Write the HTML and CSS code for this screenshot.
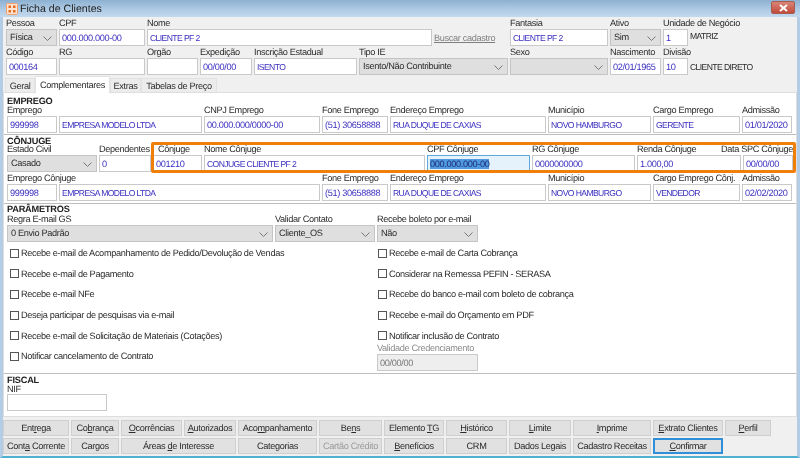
FILE: index.html
```html
<!DOCTYPE html>
<html lang="pt-BR">
<head>
<meta charset="utf-8">
<title>Ficha de Clientes</title>
<link rel="stylesheet" href="styles.css">
</head>
<body>
<div class="window">
  <header class="titlebar">
    <svg class="appicon" width="12" height="12" viewBox="0 0 12 12"><rect x="0.5" y="0.5" width="11" height="11" rx="1" fill="#fbe3d3" stroke="#f2a06c"/><path d="M2.5 2.5h2.5v2.5h-2.5zM7 2.5h2.5v2.5h-2.5zM2.5 7h2.5v2.5h-2.5zM7 7h2.5v2.5h-2.5z" fill="#ea6a1e"/></svg>
    <span class="title">Ficha de Clientes</span>
    <div class="close"><svg width="9" height="8" viewBox="0 0 9 8"><path d="M1 1l7 6M8 1l-7 6" stroke="#fff" stroke-width="2"/></svg></div>
  </header>

  <div class="head">
    <div class="grid head1">
      <div class="f"><label>Pessoa</label><div class="sel">Física<svg class="chev" width="9" height="5" viewBox="0 0 9 5"><path d="M.5.5l4 4 4-4" fill="none" stroke="#777"/></svg></div></div>
      <div class="f"><label>CPF</label><div class="in">000.000.000-00</div></div>
      <div class="f"><label>Nome</label><div class="in caps">CLIENTE PF 2</div></div>
      <div class="f"><label>&nbsp;</label><a class="link">Buscar cadastro</a></div>
      <div class="f"><label>Fantasia</label><div class="in caps">CLIENTE PF 2</div></div>
      <div class="f"><label>Ativo</label><div class="sel">Sim<svg class="chev" width="9" height="5" viewBox="0 0 9 5"><path d="M.5.5l4 4 4-4" fill="none" stroke="#777"/></svg></div></div>
      <div class="f"><label class="nowrap">Unidade de Negócio</label><div class="in">1</div></div>
      <div class="f"><label>&nbsp;</label><div class="plain up caps">MATRIZ</div></div>
    </div>
    <div class="grid head2">
      <div class="f"><label>Código</label><div class="in">000164</div></div>
      <div class="f"><label>RG</label><div class="in"></div></div>
      <div class="f"><label>Orgão</label><div class="in"></div></div>
      <div class="f"><label>Expedição</label><div class="in">00/00/00</div></div>
      <div class="f"><label>Inscrição Estadual</label><div class="in caps">ISENTO</div></div>
      <div class="f"><label>Tipo IE</label><div class="sel">Isento/Não Contribuinte<svg class="chev" width="9" height="5" viewBox="0 0 9 5"><path d="M.5.5l4 4 4-4" fill="none" stroke="#777"/></svg></div></div>
      <div class="f"><label>Sexo</label><div class="sel"><svg class="chev" width="9" height="5" viewBox="0 0 9 5"><path d="M.5.5l4 4 4-4" fill="none" stroke="#777"/></svg></div></div>
      <div class="f"><label>Nascimento</label><div class="in">02/01/1965</div></div>
      <div class="f"><label>Divisão</label><div class="in">10</div></div>
      <div class="f"><label>&nbsp;</label><div class="plain caps">CLIENTE DIRETO</div></div>
    </div>
  </div>

  <nav class="tabs">
    <div class="tab t-geral">Geral</div>
    <div class="tab active t-comp">Complementares</div>
    <div class="tab t-extras">Extras</div>
    <div class="tab t-tab">Tabelas de Preço</div>
  </nav>

  <main class="panel">
    <section class="sec s-emprego">
      <h2>EMPREGO</h2>
      <div class="grid emp">
        <div class="f"><label>Emprego</label><div class="in">999998</div></div>
        <div class="f"><label>&nbsp;</label><div class="in caps">EMPRESA MODELO LTDA</div></div>
        <div class="f"><label>CNPJ Emprego</label><div class="in">00.000.000/0000-00</div></div>
        <div class="f"><label>Fone Emprego</label><div class="in">(51) 30658888</div></div>
        <div class="f"><label>Endereço Emprego</label><div class="in caps">RUA DUQUE DE CAXIAS</div></div>
        <div class="f"><label>Município</label><div class="in caps">NOVO HAMBURGO</div></div>
        <div class="f"><label>Cargo Emprego</label><div class="in caps">GERENTE</div></div>
        <div class="f"><label>Admissão</label><div class="in">01/01/2020</div></div>
      </div>
    </section>

    <section class="sec s-conjuge">
      <div class="highlight"></div>
      <h2>CÔNJUGE</h2>
      <div class="grid conj">
        <div class="f"><label>Estado Civil</label><div class="sel">Casado<svg class="chev" width="9" height="5" viewBox="0 0 9 5"><path d="M.5.5l4 4 4-4" fill="none" stroke="#777"/></svg></div></div>
        <div class="f"><label class="nowrap">Dependentes</label><div class="in">0</div></div>
        <div class="f"><label class="indent">Cônjuge</label><div class="in">001210</div></div>
        <div class="f"><label>Nome Cônjuge</label><div class="in caps">CONJUGE CLIENTE PF 2</div></div>
        <div class="f"><label>CPF Cônjuge</label><div class="in focus"><span class="selected">000.000.000-00</span></div></div>
        <div class="f"><label>RG Cônjuge</label><div class="in">0000000000</div></div>
        <div class="f"><label>Renda Cônjuge</label><div class="in">1.000,00</div></div>
        <div class="f"><label class="rtl">Data SPC Cônjuge</label><div class="in">00/00/00</div></div>
      </div>
      <div class="grid emp2">
        <div class="f"><label>Emprego Cônjuge</label><div class="in">999998</div></div>
        <div class="f"><label>&nbsp;</label><div class="in caps">EMPRESA MODELO LTDA</div></div>
        <div class="f"><label>Fone Emprego</label><div class="in">(51) 30658888</div></div>
        <div class="f"><label>Endereço Emprego</label><div class="in caps">RUA DUQUE DE CAXIAS</div></div>
        <div class="f"><label>Município</label><div class="in caps">NOVO HAMBURGO</div></div>
        <div class="f"><label class="nowrap">Cargo Emprego Cônj.</label><div class="in caps">VENDEDOR</div></div>
        <div class="f"><label>Admissão</label><div class="in">02/02/2020</div></div>
      </div>
    </section>

    <section class="sec s-param">
      <h2>PARÂMETROS</h2>
      <div class="grid par">
        <div class="f"><label>Regra E-mail GS</label><div class="sel">0 Envio Padrão<svg class="chev" width="9" height="5" viewBox="0 0 9 5"><path d="M.5.5l4 4 4-4" fill="none" stroke="#777"/></svg></div></div>
        <div class="f"><label>Validar Contato</label><div class="sel">Cliente_OS<svg class="chev" width="9" height="5" viewBox="0 0 9 5"><path d="M.5.5l4 4 4-4" fill="none" stroke="#777"/></svg></div></div>
        <div class="f"><label class="nowrap">Recebe boleto por e-mail</label><div class="sel">Não<svg class="chev" width="9" height="5" viewBox="0 0 9 5"><path d="M.5.5l4 4 4-4" fill="none" stroke="#777"/></svg></div></div>
      </div>
      <div class="checks">
        <div class="chk"><i></i>Recebe e-mail de Acompanhamento de Pedido/Devolução de Vendas</div>
        <div class="chk"><i></i>Recebe e-mail de Carta Cobrança</div>
        <div class="chk"><i></i>Recebe e-mail de Pagamento</div>
        <div class="chk"><i></i>Considerar na Remessa PEFIN - SERASA</div>
        <div class="chk"><i></i>Recebe e-mail NFe</div>
        <div class="chk"><i></i>Recebe do banco e-mail com boleto de cobrança</div>
        <div class="chk"><i></i>Deseja participar de pesquisas via e-mail</div>
        <div class="chk"><i></i>Recebe e-mail do Orçamento em PDF</div>
        <div class="chk"><i></i>Recebe e-mail de Solicitação de Materiais (Cotações)</div>
        <div class="chk"><i></i>Notificar inclusão de Contrato</div>
        <div class="chk"><i></i>Notificar cancelamento de Contrato</div>
        <div class="f validade"><label class="nowrap">Validade Credenciamento</label><div class="in off">00/00/00</div></div>
      </div>
    </section>

    <section class="sec s-fiscal">
      <h2>FISCAL</h2>
      <div class="f nif"><label>NIF</label><div class="in"></div></div>
    </section>
  </main>

  <footer class="buttons">
    <div class="btn">Ent<u>r</u>ega</div>
    <div class="btn">Co<u>b</u>rança</div>
    <div class="btn"><u>O</u>corrências</div>
    <div class="btn"><u>A</u>utorizados</div>
    <div class="btn">Aco<u>m</u>panhamento</div>
    <div class="btn">Be<u>n</u>s</div>
    <div class="btn">Elemento <u>T</u>G</div>
    <div class="btn"><u>H</u>istórico</div>
    <div class="btn"><u>L</u>imite</div>
    <div class="btn"><u>I</u>mprime</div>
    <div class="btn"><u>E</u>xtrato Clientes</div>
    <div class="btn"><u>P</u>erfil</div>
    <div class="btn">Cont<u>a</u> Corrente</div>
    <div class="btn">Cargos</div>
    <div class="btn span2">Áreas <u>d</u>e Interesse</div>
    <div class="btn">Categorias</div>
    <div class="btn disabled">Cartão Crédito</div>
    <div class="btn"><u>B</u>enefícios</div>
    <div class="btn">CRM</div>
    <div class="btn">Dados Legais</div>
    <div class="btn">Cadastro Receitas</div>
    <div class="btn primary"><u>C</u>onfirmar</div>
  </footer>
</div>
</body>
</html>
```
FILE: styles.css
```css
* { box-sizing: border-box; }
html, body { margin: 0; padding: 0; }
body { width: 800px; height: 458px; overflow: hidden; font-family: "Liberation Sans", Arial, sans-serif; font-size: 9.2px; letter-spacing: -0.35px; text-rendering: geometricPrecision; color: #2b2b2b; }

.window { width: 800px; height: 458px; display: flex; flex-direction: column; background: #f0f0f0; border-left: 3px solid #b4cde6; border-right: 3px solid #b4cde6; border-bottom: 2px solid #4fb0cf; filter: blur(0.3px); }

.titlebar { height: 17px; margin: 0 -3px; padding: 0 5px 0 6px; display: flex; align-items: center; background: linear-gradient(#8db1d1, #aecae4 55%, #c3d9ee); }
.appicon { flex: none; }
.title { margin-left: 2px; font-size: 10.6px; letter-spacing: 0; color: #222; }
.close { margin-left: auto; margin-top: -2px; width: 24px; height: 13px; display: flex; align-items: center; justify-content: center; background: linear-gradient(#d98578, #c14a3a); border: 1px solid #a65a50; border-radius: 2px; }

.head { padding: 0 0 0 3px; height: 58px; flex: none; }
.grid { display: grid; }
.head1 { grid-template-columns: 53px 88px 287px 76px 100px 53px 27px 1fr; }
.head2 { grid-template-columns: 53px 88px 53px 54px 105px 151px 100px 53px 27px 1fr; }

.f { display: flex; flex-direction: column; min-width: 0; padding-right: 2px; }
.f label { display: block; height: 12px; line-height: 12px; color: #2b2b2b; white-space: nowrap; }
.nowrap { overflow: visible; }
.indent { padding-left: 5px; }
.rtl { text-align: right; margin-left: -30px; }

.in { flex: none; height: 17px; line-height: 16px; padding: 0 2px; background: #fff; border: 1px solid #c9c9c9; color: #3b2fbf; white-space: nowrap; overflow: hidden; }
.in.focus { background: #e6f2fb; border-color: #5ea8dc; }
.selected { background: #4f9ae0; color: #1e2a70; }
.in.off { background: #eeeeee; color: #777; }
.caps { font-size: 8.6px; letter-spacing: -0.6px; }
.sel { position: relative; flex: none; height: 17px; line-height: 15px; padding: 0 3px; background: #dfdfdf; border: 1px solid #c4c4c4; color: #2b2b2b; white-space: nowrap; }
.chev { position: absolute; right: 4px; top: 6px; }
.plain { height: 17px; line-height: 18px; color: #2b2b2b; white-space: nowrap; }
.plain.up { line-height: 14px; }
.link { display: block; height: 17px; line-height: 18px; color: #7f7f7f; text-decoration: underline; white-space: nowrap; }

.tabs { display: flex; height: 17px; flex: none; padding: 3px 0 0 2px; align-items: flex-end; }
.tab { height: 14px; line-height: 14px; text-align: center; white-space: nowrap; background: #ececec; border: 1px solid #e2e2e2; border-bottom: 0; }
.tab.active { height: 17px; line-height: 16px; background: #fff; margin-bottom: -1px; position: relative; z-index: 1; }
.t-geral { width: 30px; }
.t-comp { width: 75px; }
.t-extras { width: 31px; }
.t-tab { width: 76px; }

.panel { height: 325px; flex: none; background: #fff; border: 1px solid #dedede; }

.sec { padding-left: 3px; padding-right: 2px; border-bottom: 1px solid #bdbdbd; position: relative; }
h2 { margin: 0; height: 8px; line-height: 8px; font-size: 9.2px; letter-spacing: -0.2px; font-weight: 700; color: #222; }
.s-emprego { height: 42px; padding-top: 4px; }
.s-emprego .f label { height: 11px; line-height: 11px; }
.emp { grid-template-columns: 52px 145px 118px 68px 158px 105px 89px 52px; }
.s-conjuge { height: 69px; padding-top: 2px; }
.s-conjuge .conj .f label { height: 10px; line-height: 9px; }
.conj { grid-template-columns: 92px 54px 51px 223px 105px 105px 106px 52px; }
.emp2 { grid-template-columns: 52px 263px 68px 158px 105px 89px 52px; }
.highlight { position: absolute; left: 147px; top: 7px; width: 645px; height: 31px; border: 3px solid #f07f09; border-radius: 2px; pointer-events: none; z-index: 2; }
.s-param { height: 170px; padding-top: 1px; }
.par { grid-template-columns: 268px 102px 103px; }
.checks { display: grid; grid-template-columns: 368px 1fr; grid-auto-rows: 20.6px; margin: 1px 0 0 3px; }
.chk { display: flex; align-items: center; white-space: nowrap; }
.chk i { flex: none; width: 9px; height: 9px; margin-right: 2px; background: #fff; border: 1px solid #555; }
.validade { margin-top: -3px; width: 103px; margin-left: -1px; }
.validade label { color: #8a8a8a; height: 11px; line-height: 11px; }
.s-fiscal { border-bottom: 0; padding-top: 2px; }
.nif { width: 102px; }
.nif label { height: 10px; line-height: 10px; }

.buttons { display: grid; grid-template-columns: 68px 50px 63px 54px 81px 65px 62px 63px 64px 80px 72px 48px; grid-auto-rows: 16px; row-gap: 2px; padding-top: 3px; padding-left: 0; }
.btn { height: 16px; line-height: 15px; margin-right: 2px; text-align: center; white-space: nowrap; background: #e1e1e1; border: 1px solid #cfcfcf; color: #2b2b2b; }
.btn.span2 { grid-column: span 2; }
.btn.disabled { color: #9a9a9a; }
.btn.primary { border: 2px solid #2f8fd8; line-height: 13px; }
```
